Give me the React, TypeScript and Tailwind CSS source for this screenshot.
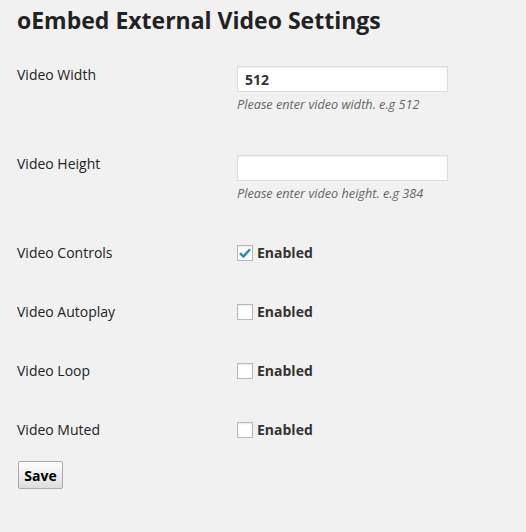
const font = { fontFamily: '"Open Sans", "Liberation Sans", sans-serif' };

function Label({ children }: { children: React.ReactNode }) {
  return <div className="w-[220px] shrink-0 pt-[1px] text-[14px] leading-[20px] text-[#222]">{children}</div>;
}

function TextRow({ label, value, hint }: { label: string; value: string; hint: string }) {
  return (
    <div className="flex h-[89px] pt-[8px]">
      <Label>{label}</Label>
      <div className="pt-[2px]">
        <input
          type="text"
          defaultValue={value}
          className="block h-[26px] w-[211px] border border-[#ddd] bg-white px-[7px] text-[14px] font-bold text-[#333] shadow-[inset_0_1px_2px_rgba(0,0,0,0.07)] outline-none"
        />
        <p className="mt-[3px] text-[12.7px] italic leading-[18px] text-[#666]">{hint}</p>
      </div>
    </div>
  );
}

function CheckRow({ label, checked, last }: { label: string; checked?: boolean; last?: boolean }) {
  return (
    <div className={`flex pt-[8px] ${last ? "h-[50px]" : "h-[59px]"}`}>
      <Label>{label}</Label>
      <label className="flex h-[20px] items-center gap-[4px] pt-[1px] text-[14px] font-bold text-[#333]">
        <span className="flex h-[16px] w-[16px] items-center justify-center border border-[#b4b9be] bg-white shadow-[inset_0_1px_2px_rgba(0,0,0,0.1)]">
          {checked && (
            <svg width="14" height="14" viewBox="0 0 14 14">
              <path d="M2 7.2 L5.4 10.6 L12 3.2" fill="none" stroke="#1e8cbe" strokeWidth="2.4" />
            </svg>
          )}
        </span>
        Enabled
      </label>
    </div>
  );
}

export default function App() {
  return (
    <div className="h-[532px] w-[526px] bg-[#f1f1f1] px-[17px]" style={font}>
      <div className="h-[56px] pt-[6px]">
        <h1 className="text-[23px] font-bold leading-[29px] text-[#222]">oEmbed External Video Settings</h1>
      </div>
      <TextRow label="Video Width" value="512" hint="Please enter video width. e.g 512" />
      <TextRow label="Video Height" value="" hint="Please enter video height. e.g 384" />
      <CheckRow label="Video Controls" checked />
      <CheckRow label="Video Autoplay" />
      <CheckRow label="Video Loop" />
      <CheckRow label="Video Muted" last />
      <button className="ml-[1px] h-[28px] w-[45px] rounded-[2px] border border-[#aaa] bg-gradient-to-b from-white to-[#ddd] text-[14px] font-bold text-black">
        Save
      </button>
    </div>
  );
}
